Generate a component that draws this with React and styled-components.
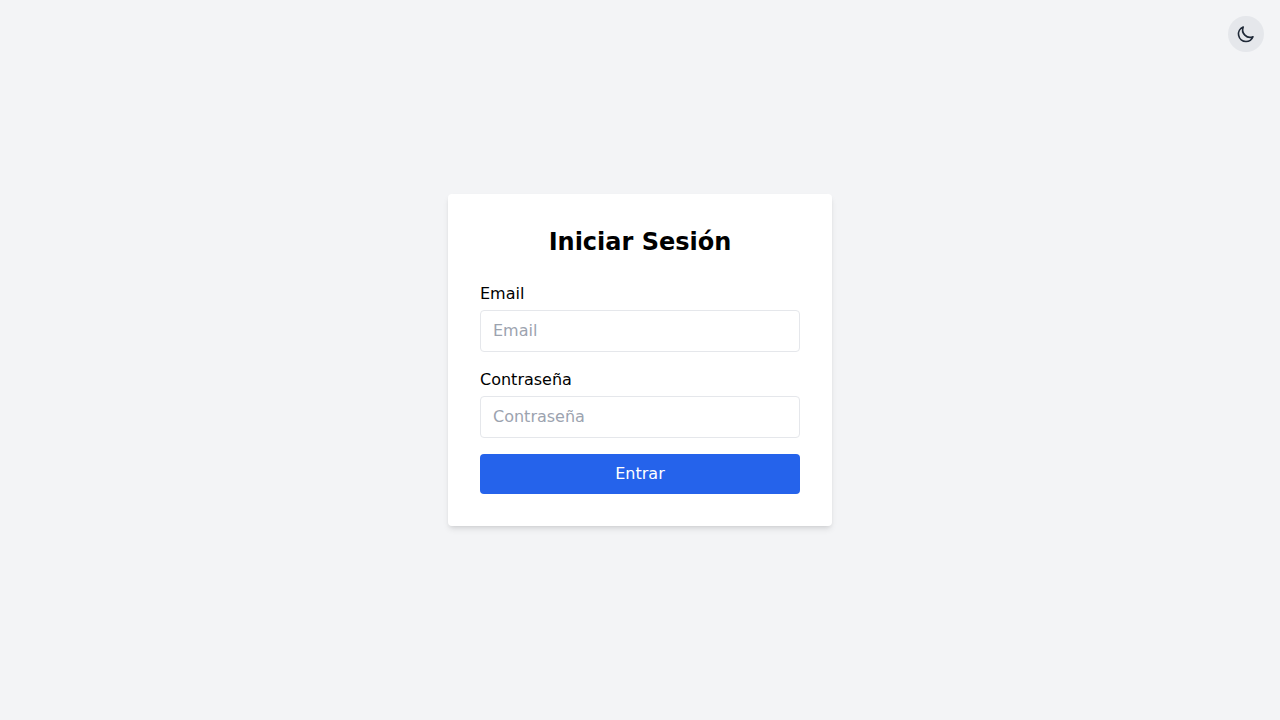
import React from 'react';
import styled, { createGlobalStyle } from 'styled-components';

const GlobalStyle = createGlobalStyle`
  *, *::before, *::after { box-sizing: border-box; }
  body {
    margin: 0;
    background: #f3f4f6;
    color: #000;
    font: 16px/24px "DejaVu Sans", sans-serif;
  }
`;

const Page = styled.main`
  min-height: 100vh;
  display: flex;
  align-items: center;
  justify-content: center;
`;

const ThemeToggle = styled.button`
  position: fixed;
  top: 16px;
  right: 16px;
  display: flex;
  padding: 8px;
  border: 0;
  border-radius: 50%;
  background: #e5e7eb;
  color: #1f2937;
  cursor: pointer;
`;

const Card = styled.form`
  display: flex;
  flex-direction: column;
  gap: 16px;
  width: 100%;
  max-width: 384px;
  padding: 32px;
  border-radius: 4px;
  background: #fff;
  box-shadow: 0 4px 6px -1px rgb(0 0 0 / 0.1), 0 2px 4px -2px rgb(0 0 0 / 0.1);
`;

const Title = styled.h1`
  margin: 0 0 8px;
  font-size: 24px;
  line-height: 32px;
  font-weight: 700;
  text-align: center;
`;

const Field = styled.div`
  display: flex;
  flex-direction: column;
  gap: 4px;
`;

const Label = styled.label`
  display: block;
`;

const Input = styled.input`
  width: 100%;
  padding: 8px 12px;
  border: 1px solid #e5e7eb;
  border-radius: 4px;
  background: #fff;
  color: inherit;
  font: inherit;
  &::placeholder { color: #9ca3af; opacity: 1; }
`;

const SubmitButton = styled.button`
  padding: 8px;
  border: 0;
  border-radius: 4px;
  background: #2563eb;
  color: #fff;
  font: inherit;
  cursor: pointer;
`;

function MoonIcon() {
  return (
    <svg
      width="20"
      height="20"
      viewBox="0 0 24 24"
      fill="none"
      stroke="currentColor"
      strokeWidth="2"
      strokeLinecap="round"
      strokeLinejoin="round"
      aria-hidden="true"
    >
      <path d="M20.354 15.354A9 9 0 018.646 3.646 9.003 9.003 0 0012 21a9.003 9.003 0 008.354-5.646z" />
    </svg>
  );
}

export default function App() {
  return (
    <>
      <GlobalStyle />
      <Page>
        <ThemeToggle type="button" aria-label="Cambiar tema">
          <MoonIcon />
        </ThemeToggle>
        <Card onSubmit={(event) => event.preventDefault()}>
          <Title>Iniciar Sesión</Title>
          <Field>
            <Label htmlFor="email">Email</Label>
            <Input id="email" type="email" placeholder="Email" />
          </Field>
          <Field>
            <Label htmlFor="password">Contraseña</Label>
            <Input id="password" type="password" placeholder="Contraseña" />
          </Field>
          <SubmitButton type="submit">Entrar</SubmitButton>
        </Card>
      </Page>
    </>
  );
}
